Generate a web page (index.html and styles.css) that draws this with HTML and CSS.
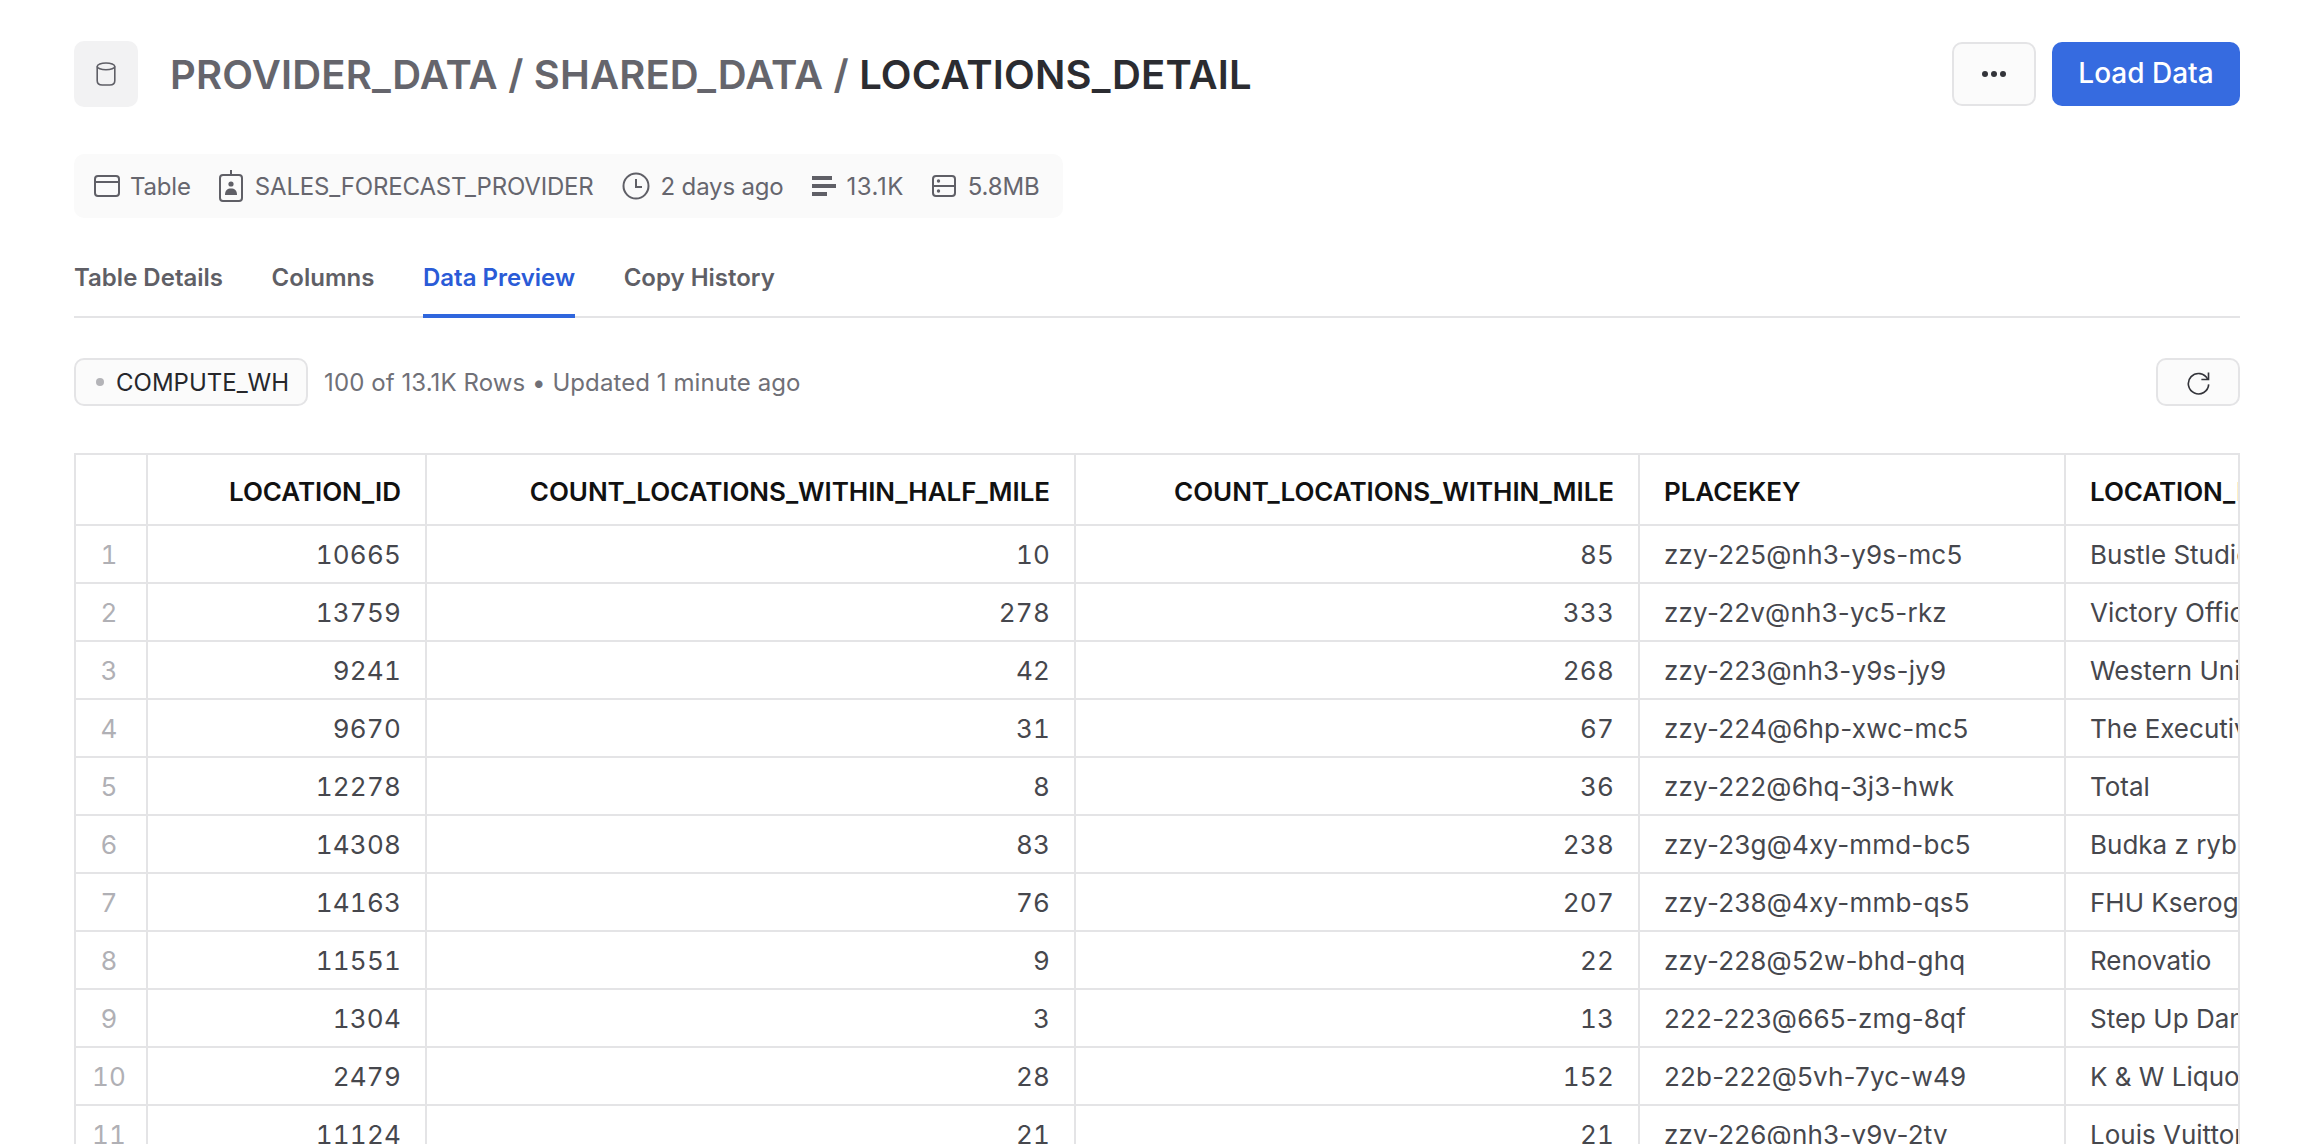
FILE: index.html
```html
<!DOCTYPE html>
<html lang="en">

<head>
    <meta charset="UTF-8">
    <meta name="viewport" content="width=device-width, initial-scale=1.0">
    <title>LOCATIONS_DETAIL</title>
    <link rel="stylesheet" href="styles.css">
</head>

<body>
    <div class="page">
        <header class="top">
            <div class="db-icon">
                <svg width="20" height="24" viewBox="0 0 20 24" fill="none" stroke="#5f5f66" stroke-width="1.6">
                    <ellipse cx="10" cy="4.4" rx="8.8" ry="3.4" />
                    <path d="M1.2 4.4v14.4c0 2.6 2.2 4.2 5 4.2h7.6c2.8 0 5-1.6 5-4.2V4.4" />
                </svg>
            </div>
            <h1 class="title">PROVIDER_DATA / SHARED_DATA / <span>LOCATIONS_DETAIL</span></h1>
            <div class="actions">
                <button class="btn-more"><i></i><i></i><i></i></button>
                <button class="btn-load">Load Data</button>
            </div>
        </header>

        <div class="meta">
            <div class="meta-item item-table">
                <svg width="26" height="22" viewBox="0 0 26 22" fill="none" stroke="#5f5f66" stroke-width="2">
                    <rect x="1" y="1" width="24" height="20" rx="3" />
                    <path d="M1 7h24" />
                </svg>
                Table
            </div>
            <div class="meta-item">
                <svg width="24" height="32" viewBox="0 0 24 32" fill="none" stroke="#5f5f66" stroke-width="2">
                    <rect x="1" y="5" width="22" height="26" rx="3" />
                    <path d="M12 0v5" />
                    <circle cx="12" cy="14" r="2.6" fill="#5f5f66" stroke="none" />
                    <path d="M6 25c0-5 2.5-6.5 6-6.5s6 1.5 6 6.5z" fill="#5f5f66" stroke="none" />
                </svg>
                SALES_FORECAST_PROVIDER
            </div>
            <div class="meta-item item-tight">
                <svg width="28" height="28" viewBox="0 0 28 28" fill="none" stroke="#5f5f66" stroke-width="2">
                    <circle cx="14" cy="14" r="12.5" />
                    <path d="M14 7v8h6" />
                </svg>
                2 days ago
            </div>
            <div class="meta-item item-tight item-count">
                <svg width="24" height="20" viewBox="0 0 24 20" fill="#5f5f66">
                    <rect x="0" y="0" width="20" height="4" />
                    <rect x="0" y="8" width="24" height="4" />
                    <rect x="0" y="16" width="15" height="4" />
                </svg>
                13.1K
            </div>
            <div class="meta-item">
                <svg width="24" height="22" viewBox="0 0 24 22" fill="none" stroke="#5f5f66" stroke-width="2">
                    <rect x="1" y="1" width="22" height="20" rx="3" />
                    <path d="M1 11h22" />
                    <circle cx="6.5" cy="6" r="1.7" fill="#5f5f66" stroke="none" />
                    <circle cx="6.5" cy="16" r="1.7" fill="#5f5f66" stroke="none" />
                </svg>
                5.8MB
            </div>
        </div>

        <nav class="tabs">
            <a href="#details">Table Details</a>
            <a href="#columns">Columns</a>
            <a class="active" href="#preview">Data Preview</a>
            <a href="#history">Copy History</a>
        </nav>

        <div class="toolbar">
            <div class="warehouse"><i></i>COMPUTE_WH</div>
            <div class="rows-info">100 of 13.1K Rows • Updated 1 minute ago</div>
            <button class="btn-refresh">
                <svg width="25" height="25" viewBox="0 0 26 26" fill="none" stroke="#33343a" stroke-width="1.7">
                    <path d="M22.5 9.5A10.6 10.6 0 1 0 23.6 15" />
                    <path d="M23.4 2.5v7.4H16" />
                </svg>
            </button>
        </div>

        <div class="table-wrap">
            <table class="grid">
                <colgroup>
                    <col class="c-idx">
                    <col class="c-id">
                    <col class="c-half">
                    <col class="c-mile">
                    <col class="c-key">
                    <col class="c-name">
                </colgroup>
                <thead>
                    <tr>
                        <th></th>
                        <th class="num">LOCATION_ID</th>
                        <th class="num">COUNT_LOCATIONS_WITHIN_HALF_MILE</th>
                        <th class="num">COUNT_LOCATIONS_WITHIN_MILE</th>
                        <th>PLACEKEY</th>
                        <th>LOCATION_NAME</th>
                    </tr>
                </thead>
                <tbody>
                    <tr><td class="idx">1</td><td class="num">10665</td><td class="num">10</td><td class="num">85</td><td>zzy-225@nh3-y9s-mc5</td><td>Bustle Studio</td></tr>
                    <tr><td class="idx">2</td><td class="num">13759</td><td class="num">278</td><td class="num">333</td><td>zzy-22v@nh3-yc5-rkz</td><td>Victory Office</td></tr>
                    <tr><td class="idx">3</td><td class="num">9241</td><td class="num">42</td><td class="num">268</td><td>zzy-223@nh3-y9s-jy9</td><td>Western Union</td></tr>
                    <tr><td class="idx">4</td><td class="num">9670</td><td class="num">31</td><td class="num">67</td><td>zzy-224@6hp-xwc-mc5</td><td>The Executive</td></tr>
                    <tr><td class="idx">5</td><td class="num">12278</td><td class="num">8</td><td class="num">36</td><td>zzy-222@6hq-3j3-hwk</td><td>Total</td></tr>
                    <tr><td class="idx">6</td><td class="num">14308</td><td class="num">83</td><td class="num">238</td><td>zzy-23g@4xy-mmd-bc5</td><td>Budka z ryba</td></tr>
                    <tr><td class="idx">7</td><td class="num">14163</td><td class="num">76</td><td class="num">207</td><td>zzy-238@4xy-mmb-qs5</td><td>FHU Kserograf</td></tr>
                    <tr><td class="idx">8</td><td class="num">11551</td><td class="num">9</td><td class="num">22</td><td>zzy-228@52w-bhd-ghq</td><td>Renovatio</td></tr>
                    <tr><td class="idx">9</td><td class="num">1304</td><td class="num">3</td><td class="num">13</td><td>222-223@665-zmg-8qf</td><td>Step Up Dance</td></tr>
                    <tr><td class="idx">10</td><td class="num">2479</td><td class="num">28</td><td class="num">152</td><td>22b-222@5vh-7yc-w49</td><td>K &amp; W Liquor</td></tr>
                    <tr><td class="idx">11</td><td class="num">11124</td><td class="num">21</td><td class="num">21</td><td>zzy-226@nh3-y9v-2tv</td><td>Louis Vuitton</td></tr>
                </tbody>
            </table>
        </div>
    </div>
</body>

</html>
```

FILE: styles.css
```css
* {
    box-sizing: border-box;
}

html,
body {
    margin: 0;
    height: 100%;
    overflow: hidden;
    background: #fff;
}

body {
    font-family: Inter, "Noto Sans", sans-serif;
    color: #46474d;
}

.page {
    padding: 41px 68px 0 74px;
}

.top {
    display: flex;
    align-items: center;
    height: 66px;
}

.db-icon {
    width: 64px;
    height: 66px;
    margin-right: 32px;
    display: flex;
    align-items: center;
    justify-content: center;
    background: #f2f2f3;
    border-radius: 10px;
}

.title {
    margin: 0;
    font-size: 40px;
    font-weight: 600;
    color: #65656c;
    letter-spacing: 0.18px;
}

.title span {
    color: #2b2c31;
}

.actions {
    margin-left: auto;
    display: flex;
    gap: 16px;
}

.btn-more {
    width: 84px;
    height: 64px;
    display: flex;
    align-items: center;
    justify-content: center;
    gap: 3px;
    background: #fbfbfb;
    border: 2px solid #e4e4e6;
    border-radius: 10px;
}

.btn-more i {
    width: 6px;
    height: 6px;
    border-radius: 50%;
    background: #33343a;
}

.btn-load {
    width: 188px;
    height: 64px;
    padding: 0 0 2px;
    background: #366be0;
    border: none;
    border-radius: 10px;
    color: #fff;
    font-family: inherit;
    font-size: 28px;
    font-weight: 500;
}

.meta {
    display: inline-flex;
    align-items: center;
    gap: 28px;
    height: 64px;
    margin-top: 47px;
    padding: 0 24px 0 20px;
    background: #fafafa;
    border-radius: 10px;
    font-size: 24px;
    letter-spacing: -0.18px;
    color: #66666e;
}

.meta-item {
    display: flex;
    align-items: center;
    gap: 12px;
}

.meta-item.item-table {
    gap: 10px;
}

.meta-item.item-tight {
    gap: 11px;
}

.meta-item.item-count {
    letter-spacing: 0.5px;
}

.tabs {
    display: flex;
    gap: 48.6px;
    height: 78px;
    margin-top: 22px;
    border-bottom: 2px solid #e4e4e6;
}

.tabs a {
    height: 78px;
    padding-top: 23px;
    font-size: 24px;
    font-weight: 600;
    color: #5f5f66;
    text-decoration: none;
}

.tabs a.active {
    color: #2a5bd7;
    border-bottom: 4px solid #2f66dd;
}

.toolbar {
    display: flex;
    align-items: center;
    height: 48px;
    margin-top: 40px;
}

.warehouse {
    display: flex;
    align-items: center;
    height: 48px;
    padding: 0 17px 0 20px;
    background: #fbfbfb;
    border: 2px solid #e4e4e6;
    border-radius: 10px;
    font-size: 24px;
    color: #26272b;
}

.warehouse i {
    width: 8px;
    height: 8px;
    margin-right: 12px;
    border-radius: 50%;
    background: #b4b4b8;
}

.rows-info {
    margin-left: 16px;
    font-size: 24px;
    letter-spacing: 0.08px;
    color: #707077;
}

.btn-refresh {
    margin-left: auto;
    width: 84px;
    height: 48px;
    display: flex;
    align-items: center;
    justify-content: center;
    padding: 0;
    background: #fbfbfb;
    border: 2px solid #e4e4e6;
    border-radius: 10px;
}

.table-wrap {
    margin-top: 47px;
    overflow: hidden;
    border-right: 2px solid #e4e4e6;
}

.grid {
    width: 2000px;
    table-layout: fixed;
    border-collapse: collapse;
    font-size: 26px;
    letter-spacing: 0.2px;
}

.c-idx { width: 72px; }
.c-id { width: 279px; }
.c-half { width: 649px; }
.c-mile { width: 564px; }
.c-key { width: 426px; }
.c-name { width: 300px; }

.grid th,
.grid td {
    height: 58px;
    padding: 0 24px;
    border: 2px solid #e4e4e6;
    text-align: left;
    white-space: nowrap;
    overflow: hidden;
}

.grid td:last-child {
    letter-spacing: 0;
}

.grid th {
    height: 71px;
    padding-top: 3px;
    font-size: 26px;
    font-weight: 600;
    color: #111;
    letter-spacing: -0.05px;
}

.grid .num {
    text-align: right;
    font-variant-numeric: tabular-nums;
}

.grid .idx {
    padding: 0 4px 0 0;
    text-align: center;
    color: #b0b0b5;
    font-variant-numeric: tabular-nums;
}
```
